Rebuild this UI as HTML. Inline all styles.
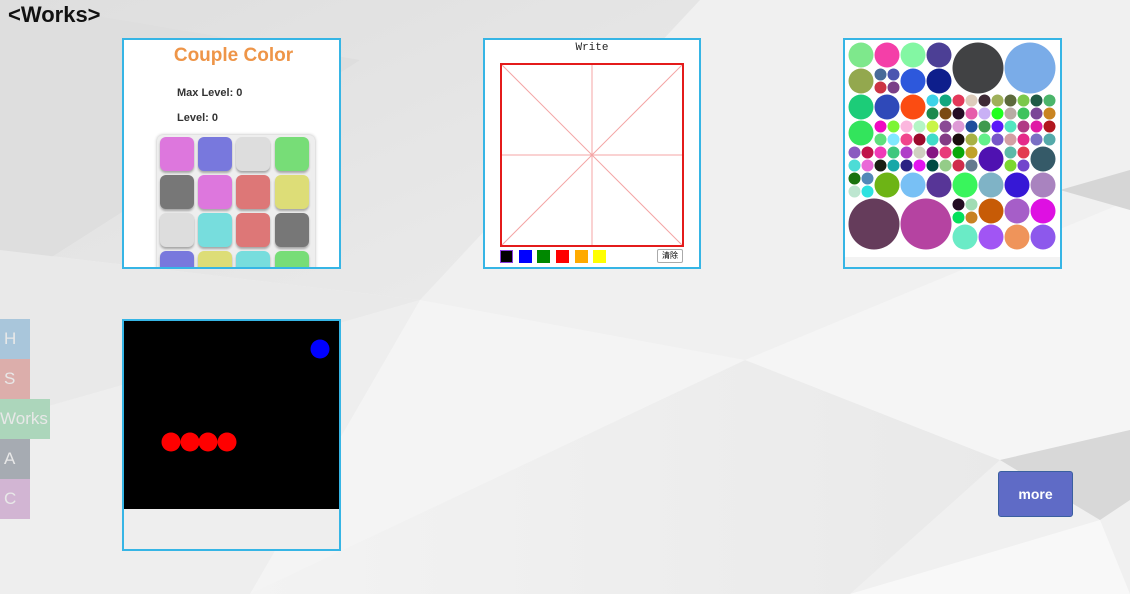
<!DOCTYPE html>
<html><head><meta charset="utf-8"><style>
*{margin:0;padding:0;box-sizing:border-box}
body{width:1130px;height:594px;overflow:hidden;position:relative;font-family:"Liberation Sans",sans-serif;background:#f0f0f0}
.bg{position:absolute;left:0;top:0}
h1{position:absolute;left:8px;top:2px;font-size:22px;font-weight:bold;color:#111}
.card{position:absolute;border:2px solid #36b5e5;background:#fff;overflow:hidden}
.tile{position:absolute;width:34px;height:34px;border-radius:6px;box-shadow:0 2px 2px rgba(0,0,0,.3)}
.nav{position:absolute;left:0;width:30px;height:40px;color:#e8e8e8;font-size:17px;text-align:left;padding-left:4px;line-height:40px}
.sw{position:absolute;top:250px;width:13px;height:13px}
</style></head><body>
<svg class="bg" width="1130" height="594">
<defs>
<linearGradient id="g1" x1="0" y1="0" x2="1" y2="1"><stop offset="0" stop-color="#dedede"/><stop offset="1" stop-color="#ececec"/></linearGradient>
<linearGradient id="g2" x1="0" y1="0" x2="1" y2="0"><stop offset="0" stop-color="#f3f3f3"/><stop offset="1" stop-color="#e9e9e9"/></linearGradient>
</defs>
<polygon points="0,0 700,0 420,300 0,250" fill="url(#g1)"/>
<polygon points="0,0 360,60 0,290" fill="#dedede"/>
<polygon points="0,250 420,300 0,420" fill="#e9e9e9"/>
<polygon points="700,0 1130,0 1130,130 860,60" fill="#f0f0f0"/>
<polygon points="0,420 420,300 250,594 0,594" fill="#eeeeee"/>
<polygon points="250,594 745,360 1000,460 850,594" fill="url(#g2)"/>
<polygon points="745,360 1130,200 1130,430 1000,460" fill="#f5f5f5"/>
<polygon points="1000,460 1130,430 1130,500 1100,520" fill="#d8d8d8"/>
<polygon points="1060,190 1130,170 1130,210" fill="#d6d6d6"/>
<polygon points="420,300 745,360 250,594" fill="#f4f4f4"/>
<polygon points="850,594 1100,520 1130,594" fill="#f8f8f8"/>
</svg>
<h1>&lt;Works&gt;</h1>

<div class="card" style="left:122px;top:38px;width:219px;height:231px">
  <div style="position:absolute;left:0;width:219px;top:5px;text-align:center;color:#ee9548;font-size:19px;font-weight:bold">Couple Color</div>
  <div style="position:absolute;left:53px;top:47px;font-size:11px;font-weight:bold;color:#333">Max Level: 0</div>
  <div style="position:absolute;left:53px;top:72px;font-size:11px;font-weight:bold;color:#333">Level: 0</div>
  <div style="position:absolute;left:33px;top:95px;width:158px;height:150px;background:#eee;border-radius:6px;box-shadow:0 0 3px rgba(0,0,0,.3)"></div>
  <div class="tile" style="left:36px;top:97px;background:#dd77dd"></div>
  <div class="tile" style="left:74px;top:97px;background:#7878dd"></div>
  <div class="tile" style="left:112px;top:97px;background:#dddddd"></div>
  <div class="tile" style="left:151px;top:97px;background:#77dd77"></div>
  <div class="tile" style="left:36px;top:135px;background:#777"></div>
  <div class="tile" style="left:74px;top:135px;background:#dd77dd"></div>
  <div class="tile" style="left:112px;top:135px;background:#dd7777"></div>
  <div class="tile" style="left:151px;top:135px;background:#dddd77"></div>
  <div class="tile" style="left:36px;top:173px;background:#ddd"></div>
  <div class="tile" style="left:74px;top:173px;background:#77dddd"></div>
  <div class="tile" style="left:112px;top:173px;background:#dd7777"></div>
  <div class="tile" style="left:151px;top:173px;background:#777"></div>
  <div class="tile" style="left:36px;top:211px;background:#7878dd"></div>
  <div class="tile" style="left:74px;top:211px;background:#dddd77"></div>
  <div class="tile" style="left:112px;top:211px;background:#77dddd"></div>
  <div class="tile" style="left:151px;top:211px;background:#77dd77"></div>
</div>

<div class="card" style="left:483px;top:38px;width:218px;height:231px">
  <div style="position:absolute;left:0;width:214px;top:2px;text-align:center;font-family:'Liberation Mono',monospace;font-size:11px;color:#222">Write</div>
  <svg style="position:absolute;left:15px;top:23px" width="184" height="184">
    <g stroke="#f4a5a5" stroke-width="1"><line x1="2" y1="2" x2="182" y2="182"/><line x1="182" y1="2" x2="2" y2="182"/><line x1="92" y1="2" x2="92" y2="182"/><line x1="2" y1="92" x2="182" y2="92"/></g>
    <rect x="1" y="1" width="182" height="182" fill="none" stroke="#e41b1b" stroke-width="2"/>
  </svg>
  <div class="sw" style="left:15px;top:210px;background:#000;border:1px solid #8a3ee0"></div>
  <div class="sw" style="left:34px;top:210px;background:#00f"></div>
  <div class="sw" style="left:52px;top:210px;background:#080"></div>
  <div class="sw" style="left:71px;top:210px;background:#f00"></div>
  <div class="sw" style="left:90px;top:210px;background:#fa0"></div>
  <div class="sw" style="left:108px;top:210px;background:#ff0"></div>
  <div style="position:absolute;left:172px;top:209px;width:26px;height:14px;border:1px solid #aaa;border-radius:2px;font-size:8px;line-height:12px;text-align:center;font-family:'Liberation Sans','Noto Sans CJK SC',sans-serif">清除</div>
</div>

<div class="card" style="left:843px;top:38px;width:219px;height:231px;background:#f3f3f3">
<svg style="position:absolute;left:-845px;top:-40px" width="1130" height="300">
<rect x="845" y="40" width="215" height="217" fill="#fff"/>
<g>
<circle cx="861" cy="55" r="12.5" fill="#7ee88c"/><circle cx="887" cy="55" r="12.5" fill="#f43fa8"/><circle cx="913" cy="55" r="12.5" fill="#83f7a3"/><circle cx="939" cy="55" r="12.5" fill="#4c3f95"/>
<circle cx="978" cy="68" r="25.5" fill="#414244"/><circle cx="1030" cy="68" r="25.5" fill="#7aace8"/>
<circle cx="861" cy="81" r="12.5" fill="#93a84e"/><circle cx="913" cy="81" r="12.5" fill="#2d58dc"/><circle cx="939" cy="81" r="12.5" fill="#0e1e8c"/>
<circle cx="861" cy="107" r="12.5" fill="#1ccc78"/><circle cx="887" cy="107" r="12.5" fill="#2f49b9"/><circle cx="913" cy="107" r="12.5" fill="#fb4c12"/>
<circle cx="861" cy="133" r="12.5" fill="#33e45c"/>
<circle cx="991" cy="159" r="12.5" fill="#4f11b1"/><circle cx="1043" cy="159" r="12.5" fill="#355a68"/>
<circle cx="887" cy="185" r="12.5" fill="#6db415"/><circle cx="913" cy="185" r="12.5" fill="#78c0f5"/><circle cx="939" cy="185" r="12.5" fill="#573597"/><circle cx="965" cy="185" r="12.5" fill="#39f55c"/><circle cx="991" cy="185" r="12.5" fill="#7fb3c6"/><circle cx="1017" cy="185" r="12.5" fill="#3618d6"/><circle cx="1043" cy="185" r="12.5" fill="#a983bf"/>
<circle cx="874" cy="224" r="25.5" fill="#653c5b"/><circle cx="926" cy="224" r="25.5" fill="#b543a1"/>
<circle cx="991" cy="211" r="12.5" fill="#c75b06"/><circle cx="1017" cy="211" r="12.5" fill="#a65ec8"/><circle cx="1043" cy="211" r="12.5" fill="#de10e2"/>
<circle cx="965" cy="237" r="12.5" fill="#6aebc6"/><circle cx="991" cy="237" r="12.5" fill="#a155f4"/><circle cx="1017" cy="237" r="12.5" fill="#ef945a"/><circle cx="1043" cy="237" r="12.5" fill="#8d58ec"/>
</g>
<g>
<circle cx="880.5" cy="74.5" r="6" fill="#486a99"/><circle cx="893.5" cy="74.5" r="6" fill="#4b55b0"/><circle cx="880.5" cy="87.5" r="6" fill="#c34"/><circle cx="893.5" cy="87.5" r="6" fill="#7a3f88"/>
<circle cx="932.5" cy="100.5" r="6" fill="#3cd3e8"/><circle cx="945.5" cy="100.5" r="6" fill="#12a77f"/><circle cx="958.5" cy="100.5" r="6" fill="#e3385a"/><circle cx="971.5" cy="100.5" r="6" fill="#dcb"/><circle cx="984.5" cy="100.5" r="6" fill="#3e2a36"/><circle cx="997.5" cy="100.5" r="6" fill="#9fb05a"/><circle cx="1010.5" cy="100.5" r="6" fill="#5d6a3c"/><circle cx="1023.5" cy="100.5" r="6" fill="#7bc84b"/><circle cx="1036.5" cy="100.5" r="6" fill="#1f5a45"/><circle cx="1049.5" cy="100.5" r="6" fill="#4bb56a"/>
<circle cx="932.5" cy="113.5" r="6" fill="#1d8a4e"/><circle cx="945.5" cy="113.5" r="6" fill="#7a4b13"/><circle cx="958.5" cy="113.5" r="6" fill="#230b25"/><circle cx="971.5" cy="113.5" r="6" fill="#e65caa"/><circle cx="984.5" cy="113.5" r="6" fill="#c9b0f5"/><circle cx="997.5" cy="113.5" r="6" fill="#1eff1e"/><circle cx="1010.5" cy="113.5" r="6" fill="#b8aca4"/><circle cx="1023.5" cy="113.5" r="6" fill="#3dc35c"/><circle cx="1036.5" cy="113.5" r="6" fill="#7a4797"/><circle cx="1049.5" cy="113.5" r="6" fill="#c98421"/>
<circle cx="880.5" cy="126.5" r="6" fill="#f00ac2"/><circle cx="893.5" cy="126.5" r="6" fill="#7cf534"/><circle cx="906.5" cy="126.5" r="6" fill="#fbb7de"/><circle cx="919.5" cy="126.5" r="6" fill="#b4f5c5"/><circle cx="932.5" cy="126.5" r="6" fill="#c8f547"/><circle cx="945.5" cy="126.5" r="6" fill="#8a4a95"/><circle cx="958.5" cy="126.5" r="6" fill="#de9ad6"/><circle cx="971.5" cy="126.5" r="6" fill="#1f4d9c"/><circle cx="984.5" cy="126.5" r="6" fill="#409a4e"/><circle cx="997.5" cy="126.5" r="6" fill="#5b1af8"/><circle cx="1010.5" cy="126.5" r="6" fill="#52e6c0"/><circle cx="1023.5" cy="126.5" r="6" fill="#b03a85"/><circle cx="1036.5" cy="126.5" r="6" fill="#e01ba6"/><circle cx="1049.5" cy="126.5" r="6" fill="#b1171f"/>
<circle cx="880.5" cy="139.5" r="6" fill="#5fe07c"/><circle cx="893.5" cy="139.5" r="6" fill="#80e8ff"/><circle cx="906.5" cy="139.5" r="6" fill="#f0448c"/><circle cx="919.5" cy="139.5" r="6" fill="#9b0b2c"/><circle cx="932.5" cy="139.5" r="6" fill="#40dcc8"/><circle cx="945.5" cy="139.5" r="6" fill="#833b85"/><circle cx="958.5" cy="139.5" r="6" fill="#1a0e0e"/><circle cx="971.5" cy="139.5" r="6" fill="#a8b144"/><circle cx="984.5" cy="139.5" r="6" fill="#63f08a"/><circle cx="997.5" cy="139.5" r="6" fill="#7856c8"/><circle cx="1010.5" cy="139.5" r="6" fill="#d4a0a4"/><circle cx="1023.5" cy="139.5" r="6" fill="#e52a8a"/><circle cx="1036.5" cy="139.5" r="6" fill="#7a6fc4"/><circle cx="1049.5" cy="139.5" r="6" fill="#5aa"/>
<circle cx="854.5" cy="152.5" r="6" fill="#8b5ac0"/><circle cx="867.5" cy="152.5" r="6" fill="#c0124a"/><circle cx="880.5" cy="152.5" r="6" fill="#f03ab8"/><circle cx="893.5" cy="152.5" r="6" fill="#3ec87e"/><circle cx="906.5" cy="152.5" r="6" fill="#b03ec8"/><circle cx="919.5" cy="152.5" r="6" fill="#cfd0c0"/><circle cx="932.5" cy="152.5" r="6" fill="#861483"/><circle cx="945.5" cy="152.5" r="6" fill="#e83a7a"/><circle cx="958.5" cy="152.5" r="6" fill="#0aa80a"/><circle cx="971.5" cy="152.5" r="6" fill="#c0a22a"/>
<circle cx="854.5" cy="165.5" r="6" fill="#4ddcd6"/><circle cx="867.5" cy="165.5" r="6" fill="#ea6ad8"/><circle cx="880.5" cy="165.5" r="6" fill="#1b1e14"/><circle cx="893.5" cy="165.5" r="6" fill="#17a8a8"/><circle cx="906.5" cy="165.5" r="6" fill="#2c2384"/><circle cx="919.5" cy="165.5" r="6" fill="#e414f0"/><circle cx="932.5" cy="165.5" r="6" fill="#004b44"/><circle cx="945.5" cy="165.5" r="6" fill="#94cc88"/><circle cx="958.5" cy="165.5" r="6" fill="#d02c4c"/><circle cx="971.5" cy="165.5" r="6" fill="#647a90"/>
<circle cx="1010.5" cy="152.5" r="6" fill="#5cbaa8"/><circle cx="1023.5" cy="152.5" r="6" fill="#e33a50"/><circle cx="1010.5" cy="165.5" r="6" fill="#7cd830"/><circle cx="1023.5" cy="165.5" r="6" fill="#7245cc"/>
<circle cx="854.5" cy="178.5" r="6" fill="#1a730f"/><circle cx="867.5" cy="178.5" r="6" fill="#5288b8"/><circle cx="854.5" cy="191.5" r="6" fill="#bde6d0"/><circle cx="867.5" cy="191.5" r="6" fill="#2ee2e0"/>
<circle cx="958.5" cy="204.5" r="6" fill="#230d22"/><circle cx="971.5" cy="204.5" r="6" fill="#a0dcb4"/><circle cx="958.5" cy="217.5" r="6" fill="#05e05c"/><circle cx="971.5" cy="217.5" r="6" fill="#c88222"/>
</g>
</svg>
</div>

<div class="card" style="left:122px;top:319px;width:219px;height:232px;background:#eee">
  <div style="position:absolute;left:0;top:0;width:215px;height:188px;background:#000"></div>
  <svg style="position:absolute;left:0;top:0" width="215" height="190">
    <circle cx="196" cy="28" r="9.5" fill="#00f"/>
    <circle cx="47" cy="121" r="9.5" fill="#f00"/><circle cx="66" cy="121" r="9.5" fill="#f00"/><circle cx="84" cy="121" r="9.5" fill="#f00"/><circle cx="103" cy="121" r="9.5" fill="#f00"/>
  </svg>
</div>

<div class="nav" style="top:319px;background:#a9c6db">H</div>
<div class="nav" style="top:359px;background:#dcaeab">S</div>
<div class="nav" style="top:399px;width:50px;background:#acd6bb;padding-left:0;white-space:nowrap;overflow:hidden">Works</div>
<div class="nav" style="top:439px;background:#a6abb2">A</div>
<div class="nav" style="top:479px;background:#d2b5d3">C</div>

<div style="position:absolute;left:998px;top:471px;width:75px;height:46px;background:#5f6bc6;border:1px solid #3a5fa0;border-radius:3px;color:#fff;font-size:14px;font-weight:bold;text-align:center;line-height:44px">more</div>
</body></html>
